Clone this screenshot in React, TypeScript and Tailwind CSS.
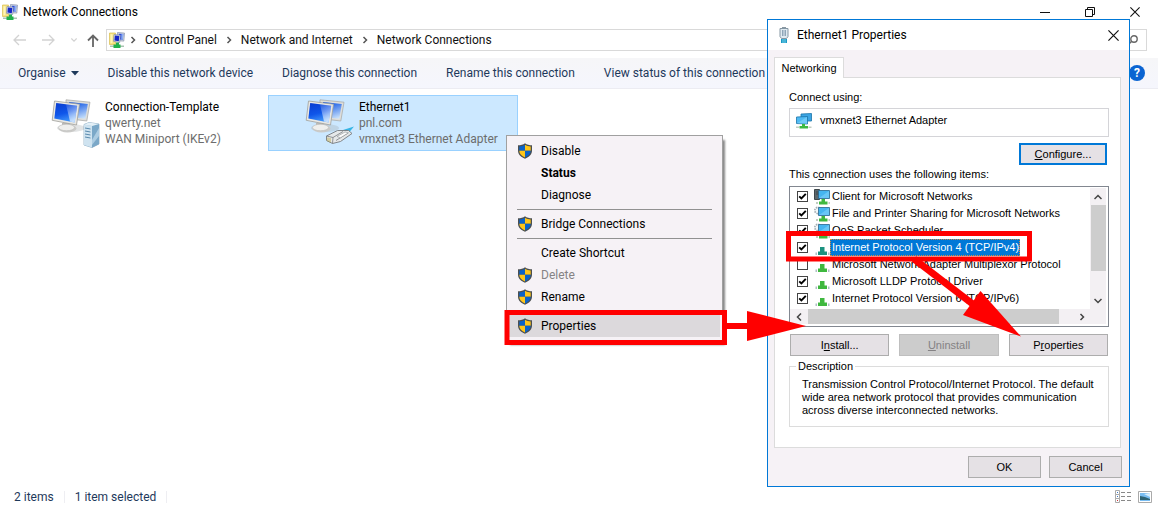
import React from "react";

const WINDOW_FONT = "font-[Roboto,'Noto_Sans',sans-serif]";
const DIALOG_FONT = "font-['Liberation_Sans',Arial,sans-serif]";

function NetworkFolderIcon() {
  return (
    <svg width="16" height="16" viewBox="0 0 16 16" aria-hidden="true">
      <path d="M.5 1h6v11.500h-6z" fill="#f6e27c" stroke="#d9bd52" strokeWidth="0.7" />
      <path d="M1.500 2.200h2v9h-2z" fill="#fdf4b8" />
      <path d="M8.500.500l7 .6-.7 8-6.300-.4z" fill="#cfd6e4" stroke="#8791aa" strokeWidth="0.7" />
      <path d="M9.800 1.700l4.500.4-.5 5.700-4-.3z" fill="#2a48dc" />
      <path d="M12.500 2l1.800.1-.5 5.700-1.600-.1z" fill="#8eb0f4" />
      <path d="M5 2.500l6.300.7-.6 7.300-6.300-1.200z" fill="#d8dfec" stroke="#7f89a3" strokeWidth="0.7" />
      <path d="M5.900 3.600l4.400.5-.5 5.100-4.400-.8z" fill="#1726c8" />
      <path d="M7 10.500h3V13H7z" fill="#26ad52" />
      <path d="M1 13.500h14V15H1z" fill="#a9c3b1" />
      <path d="M4.500 12.500h7V16h-7z" fill="#1fb14b" />
    </svg>
  );
}

function Monitors() {
  return (
    <>
      <ellipse cx="20" cy="29" rx="14" ry="4" fill="#9fa4a8" opacity="0.3" />
      <path d="M15 .8L39 3.200 35.800 22 15 19.500z" fill="#dededb" stroke="#a5a5a2" strokeWidth="0.7" />
      <path d="M18 2.900l18.800 2-2.500 14.900L18 18z" fill="url(#screenBack)" />
      <path d="M11 24h8v4h-8z" fill="#b9b9b7" />
      <ellipse cx="16.500" cy="29.500" rx="9" ry="4" fill="#cbcbc9" />
      <ellipse cx="15.500" cy="28.500" rx="8" ry="3.200" fill="#efefed" stroke="#b5b5b2" strokeWidth="0.500" />
      <path d="M3.500 2l25 3.200L25.500 26 1.200 21.300z" fill="#e9e8e4" stroke="#a09f9b" strokeWidth="0.800" />
      <path d="M5.200 4l21 2.700-2.600 16.800L3.300 19.600z" fill="url(#screenFront)" />
      <path d="M15 5.300l11.200 1.400-2.600 16.800-4.600-.9z" fill="url(#screenShine)" />
    </>
  );
}

function ConnectionIcon({ kind }: { kind: "server" | "cable" }) {
  return (
    <svg width="50" height="50" viewBox="0 0 50 50" className="shrink-0" aria-hidden="true">
      <defs>
        <linearGradient id="screenFront" x1="0" y1="0" x2="0.3" y2="1">
          <stop offset="0" stopColor="#0a3ccf" />
          <stop offset="0.6" stopColor="#0f56ea" />
          <stop offset="1" stopColor="#3f93f8" />
        </linearGradient>
        <linearGradient id="screenShine" x1="0" y1="0" x2="0.4" y2="1">
          <stop offset="0" stopColor="#fff" stopOpacity="0.1" />
          <stop offset="1" stopColor="#fff" stopOpacity="0.7" />
        </linearGradient>
        <linearGradient id="screenBack" x1="0.4" y1="0" x2="0.8" y2="1">
          <stop offset="0" stopColor="#0f55e4" />
          <stop offset="1" stopColor="#cfe6fc" />
        </linearGradient>
      </defs>
      <Monitors />
      {kind === "server" ? (
        <g>
          <path d="M33 25.500l5-2 10 1.500v20L41 48.500 33 46z" fill="#8fb9d6" stroke="#7095b0" strokeWidth="0.600" />
          <path d="M33 25.500l8 1.500v21.500L33 46z" fill="#cfe3f0" />
          <path d="M34 29l5.500 1M34 32l5.500 1M34 35l5.500 1M34 38l5.500 1" stroke="#5a8bae" strokeWidth="1" />
          <path d="M41 27l7-2v20l-7 3.500z" fill="#7ba8c8" />
          <path d="M41 41l7-12v8l-7 9z" fill="#c2dcec" opacity="0.700" />
          <path d="M33 25.500l5-2 10 1.500-7 2z" fill="#e4f0f7" />
        </g>
      ) : (
        <g strokeLinejoin="round">
          <path d="M38 31l11-3.500-5 6z" fill="#35b4e4" />
          <path d="M21.500 37l11-5.500h11l3.500 3-11.500 8-8 2-6-3z" fill="#e6e8e9" stroke="#777b7f" strokeWidth="0.900" />
          <path d="M21.500 37l6.500 1.500-.5 6M28 38.500l10-6M31 41.500l12-7.500" fill="none" stroke="#777b7f" strokeWidth="0.800" />
          <path d="M23 38.500v4M25 39v4.500" stroke="#b6a94e" strokeWidth="0.900" />
          <path d="M32 37.500l8-4.500 3.500.8-8 5z" fill="#fbfbfb" stroke="#8d9296" strokeWidth="0.600" />
        </g>
      )}
    </svg>
  );
}

function Shield() {
  return (
    <svg width="14" height="16" viewBox="0 0 14 16" aria-hidden="true">
      <path d="M7 .2C5.300 1.600 2.600 2.200 0 2.300v5.300c0 3.900 2.900 6.600 7 8.200 4.100-1.600 7-4.300 7-8.200V2.300C11.400 2.200 8.700 1.600 7 .2z" fill="#4b4f50" />
      <path d="M7 1.700C5.400 2.800 3.300 3.300 1.300 3.500v4.300H7z" fill="#0b63c9" />
      <path d="M7 1.700c1.600 1.100 3.700 1.600 5.700 1.800v4.300H7z" fill="#ffc61a" />
      <path d="M1.300 7.800H7v6.600c-3.300-1.400-5.700-3.500-5.700-6.600z" fill="#ffc61a" />
      <path d="M12.700 7.800H7v6.600c3.300-1.400 5.700-3.500 5.700-6.600z" fill="#0b63c9" />
    </svg>
  );
}

function Chevron({ dir, size = 8 }: { dir: "up" | "down" | "left" | "right"; size?: number }) {
  const paths = { up: "M.5 6L4 2.500 7.500 6", down: "M.5 2L4 5.500 7.500 2", left: "M6 .5L2.500 4 6 7.500", right: "M2.500 1l3 3-3 3" };
  return (
    <svg width={size} height={size} viewBox="0 0 8 8" aria-hidden="true">
      <path d={paths[dir]} fill="none" stroke="currentColor" strokeWidth="1.500" />
    </svg>
  );
}

function Cross({ size }: { size: number }) {
  return (
    <svg width={size} height={size} viewBox="0 0 10 10" aria-hidden="true">
      <path d="M.4.4l9.200 9.200M9.600.4L.4 9.600" stroke="#111" strokeWidth="1.100" />
    </svg>
  );
}

function TitleBar() {
  return (
    <header className="flex h-6 items-center pl-[2px] pr-[18px]">
      <NetworkFolderIcon />
      <h1 className="ml-[5px] flex-1 text-black">Network Connections</h1>
      <div className="flex items-center gap-[35px]">
        <button aria-label="Minimise">
          <svg width="10" height="10" viewBox="0 0 10 10"><path d="M0 5.500h10" stroke="#111" /></svg>
        </button>
        <button aria-label="Restore">
          <svg width="10" height="10" viewBox="0 0 10 10" fill="none" stroke="#111">
            <path d="M.5 2.500h7v7h-7zM2.500 2.500v-2h7v7h-2" />
          </svg>
        </button>
        <button aria-label="Close"><Cross size={10} /></button>
      </div>
    </header>
  );
}

function AddressRow() {
  return (
    <div className="flex h-[34px] items-center pl-[13px] pr-[11px] pb-[2px]">
      <nav className="flex w-[93px] items-center gap-4 text-[#d2d2d2]" aria-label="History">
        <button aria-label="Back">
          <svg width="13" height="12" viewBox="0 0 13 12" fill="none" stroke="currentColor" strokeWidth="1.300"><path d="M13 6H1M6 1L1 6l5 5" /></svg>
        </button>
        <button aria-label="Forward">
          <svg width="13" height="12" viewBox="0 0 13 12" fill="none" stroke="currentColor" strokeWidth="1.300"><path d="M0 6h12M7 1l5 5-5 5" /></svg>
        </button>
        <div className="flex items-center gap-[10px]">
          <button aria-label="Recent"><Chevron dir="down" size={6} /></button>
          <button aria-label="Up" className="text-[#666]">
            <svg width="12" height="13" viewBox="0 0 12 13" fill="none" stroke="currentColor" strokeWidth="1.800"><path d="M6 13V2M1 6.500l5-5 5 5" /></svg>
          </button>
        </div>
      </nav>
      <div className="flex h-[22px] flex-1 items-center gap-2 border border-[#d9d9d9] pl-[2px] text-[#111]">
        <span className="-mr-1"><NetworkFolderIcon /></span>
        <span className="text-[#555]"><Chevron dir="right" /></span>
        <a href="#control-panel">Control Panel</a>
        <span className="text-[#555]"><Chevron dir="right" /></span>
        <a href="#network">Network and Internet</a>
        <span className="text-[#555]"><Chevron dir="right" /></span>
        <a href="#connections">Network Connections</a>
      </div>
      <div className="ml-3 flex h-[22px] w-[200px] items-center border border-[#d9d9d9] pr-2">
        <input aria-label="Search" className="min-w-0 flex-1 outline-none" />
        <svg width="10" height="10" viewBox="0 0 10 10" fill="none" stroke="#666" strokeWidth="1.400" aria-hidden="true">
          <circle cx="6" cy="4" r="3.200" /><path d="M3.700 6.300L.5 9.500" />
        </svg>
      </div>
    </div>
  );
}

function CommandBar() {
  return (
    <div className="flex h-[31px] items-center gap-[29px] whitespace-nowrap border-b border-[#ececf2] bg-linear-to-b from-[#f6f6f8] to-[#f5f6fd] pl-[18px] pr-[13px] text-[#1e395b]">
      <button className="flex items-center gap-[5px]">
        Organise
        <svg width="8" height="5" viewBox="0 0 8 5" aria-hidden="true"><path d="M0 0h8L4 4.500z" fill="#1e395b" /></svg>
      </button>
      <button>Disable this network device</button>
      <button>Diagnose this connection</button>
      <button>Rename this connection</button>
      <button>View status of this connection</button>
      <button aria-label="Help" className="ml-auto flex size-4 items-center justify-center rounded-full bg-[#0a64d2] font-bold text-white">?</button>
    </div>
  );
}

function Connection({ name, domain, device, kind, selected }: { name: string; domain: string; device: string; kind: "server" | "cable"; selected?: boolean }) {
  return (
    <article className={selected ? "flex h-14 w-[250px] gap-1 border border-[#99d1ff] bg-[#cce8ff] pl-[36px] pt-[3px]" : "flex h-14 w-[250px] gap-1 border border-transparent pl-[36px] pt-[3px]"}>
      <ConnectionIcon kind={kind} />
      <div className="whitespace-nowrap leading-4 text-[#6d6d6d]">
        <h2 className="text-black">{name}</h2>
        <p>{domain}</p>
        <p>{device}</p>
      </div>
    </article>
  );
}

function MenuItem({ label, shield, look = "text-black" }: { label: string; shield?: boolean; look?: string }) {
  return (
    <li>
      <button className={"flex h-[22px] w-full items-center text-left " + look}>
        <span className="flex w-[32px] justify-start pl-[9px]">{shield && <Shield />}</span>
        {label}
      </button>
    </li>
  );
}

function Separator() {
  return <li className="mx-[8px] flex h-[7px] items-center" role="separator"><span className="h-px w-full bg-[#919191]" /></li>;
}

function ContextMenu() {
  return (
    <ul className="absolute left-[506px] top-[135px] w-[217px] border border-[#a0a0a0] bg-[#f6f2f6] px-[2px] py-1 shadow-[3px_4px_2px_-1px_#888]">
      <MenuItem label="Disable" shield />
      <MenuItem label="Status" look="font-bold text-black" />
      <MenuItem label="Diagnose" />
      <Separator />
      <MenuItem label="Bridge Connections" shield />
      <Separator />
      <MenuItem label="Create Shortcut" />
      <MenuItem label="Delete" shield look="text-[#858385]" />
      <MenuItem label="Rename" shield />
      <Separator />
      <MenuItem label="Properties" shield look="bg-[#dcd9dc] text-black" />
    </ul>
  );
}

function AdapterIcon() {
  return (
    <svg width="16" height="16" viewBox="0 0 16 16" aria-hidden="true">
      <path d="M5 1l10.500-.5v7.500H5z" fill="#3ba5e4" stroke="#1b73a8" strokeWidth="0.800" />
      <path d="M.5 4l11-.5v7.500l-11-.5z" fill="#4fbaf3" stroke="#1b73a8" strokeWidth="0.800" />
      <path d="M1 10.200L11 4v6.700z" fill="#86d6fa" opacity="0.600" />
      <path d="M6 11h3v2h3v2.500H3.500V13H6z" fill="#3cb843" />
      <path d="M0 13.500h3v1.500H0zM12.500 13.500h3v1.500h-3z" fill="#c2cdc2" />
    </svg>
  );
}

function ItemIcon({ kind }: { kind: "client" | "service" | "protocol" | "chosen" }) {
  if (kind === "protocol" || kind === "chosen") {
    const fill = kind === "chosen" ? "#1b9280" : "#3fb83f";
    return (
      <svg width="16" height="16" viewBox="0 0 16 16" className="shrink-0" aria-hidden="true">
        <path d="M6 7h4.500v4.500H13V15H4v-3.500h2z" fill={fill} />
        <path d="M1.500 12.500H3V15H1.500zM14 12.500h1.500V15H14z" fill="#aebfc4" />
      </svg>
    );
  }
  return (
    <svg width="16" height="16" viewBox="0 0 16 16" className="shrink-0" aria-hidden="true">
      {kind === "client" ? (
        <path d="M.5.500h5v10h-5zM2 3h3M2 5h3" fill="#5d686d" stroke="#3e474b" />
      ) : (
        <circle cx="4" cy="4.500" r="3.200" fill="#f4f7f8" stroke="#a3adb3" strokeWidth="1.600" strokeDasharray="1.500 1" />
      )}
      <path d="M4.500 1.500h11v8h-11z" fill="#45b5f0" stroke="#27658c" strokeWidth="0.800" />
      <path d="M5 9l10-7v7z" fill="#8bd7fb" opacity="0.500" />
      <path d="M7.500 10h3.500v2.500h2.500V15.500H5v-3h2.500z" fill="#3fb83f" />
      <path d="M2 13h2v2H2zM14.500 13H16v2h-1.500z" fill="#c2cdc2" />
    </svg>
  );
}

const ITEMS: { label: string; kind: "client" | "service" | "protocol" | "chosen"; on: boolean }[] = [
  { label: "Client for Microsoft Networks", kind: "client", on: true },
  { label: "File and Printer Sharing for Microsoft Networks", kind: "service", on: true },
  { label: "QoS Packet Scheduler", kind: "service", on: true },
  { label: "Internet Protocol Version 4 (TCP/IPv4)", kind: "chosen", on: true },
  { label: "Microsoft Network Adapter Multiplexor Protocol", kind: "protocol", on: false },
  { label: "Microsoft LLDP Protocol Driver", kind: "protocol", on: true },
  { label: "Internet Protocol Version 6 (TCP/IPv6)", kind: "protocol", on: true },
];

function ItemRow({ label, kind, on }: { label: string; kind: "client" | "service" | "protocol" | "chosen"; on: boolean }) {
  return (
    <li>
      <label className="flex h-[17px] items-center whitespace-nowrap">
        <span className="mr-[6px] grid size-[11px] shrink-0 place-items-center">
          <input type="checkbox" defaultChecked={on} className="peer col-start-1 row-start-1 size-[11px] appearance-none border border-[#444] bg-white" />
          <svg width="9" height="9" viewBox="0 0 9 9" className="pointer-events-none col-start-1 row-start-1 hidden peer-checked:block" aria-hidden="true">
            <path d="M1.200 4.300l2.200 2.200L7.800 1.800" fill="none" stroke="#000" strokeWidth="1.900" />
          </svg>
        </span>
        <ItemIcon kind={kind} />
        <span className={kind === "chosen" ? "h-[17px] border border-dotted border-[#d98a3c] bg-[#0078d7] pl-px leading-[15px] text-white" : "pl-[2px]"}>{label}</span>
      </label>
    </li>
  );
}

function DialogButton({ children, look = "border-[#adadad] bg-[#e5e1e5] text-black", disabled }: { children: React.ReactNode; look?: string; disabled?: boolean }) {
  return <button disabled={disabled} className={"h-[22px] border text-center " + look}>{children}</button>;
}

function PropertiesDialog() {
  return (
    <section role="dialog" aria-label="Ethernet1 Properties" className={"absolute left-[767px] top-[19px] w-[363px] border border-solid border-[#0078d7] bg-[#f6f2f6] text-[11px] leading-[13px] text-black " + DIALOG_FONT}>
      <div className={"flex h-[30px] items-center bg-white pl-[11px] pr-[10px] text-[12px] " + WINDOW_FONT}>
        <svg width="10" height="16" viewBox="0 0 10 16" aria-hidden="true">
          <path d="M3 0h4v2H3z" fill="#8a99a3" />
          <path d="M1 1.500h8v8l-1.500 2h-5L1 9.500z" fill="#dfeaf1" stroke="#8496a3" />
          <path d="M3 3h1.500v6H3zM5.500 3H7v6H5.500z" fill="#8fa6b8" />
          <path d="M2 12h6v4H2z" fill="#1c98c4" /><path d="M4 12v4M6 12v4" stroke="#8fe2f6" strokeWidth="0.800" />
        </svg>
        <h2 className="ml-2 flex-1">Ethernet1 Properties</h2>
        <button aria-label="Close dialog"><Cross size={11} /></button>
      </div>
      <div className="px-[6px] pb-2 pt-[7px]">
        <button role="tab" aria-selected="true" className="relative z-10 -mb-px block h-[21px] w-[70px] border border-b-0 border-[#dcdcdc] bg-white">Networking</button>
        <div className="mr-[2px] h-[371px] border border-[#dcdcdc] bg-white pl-[14px] pr-[11px] pt-[13px]">
          <p>Connect using:</p>
          <div className="mt-[4px] flex h-[29px] items-start gap-2 border border-[#d4d4d8] pl-[6px] pt-1">
            <AdapterIcon />
            <span className="pt-px">vmxnet3 Ethernet Adapter</span>
          </div>
          <div className="mt-[6px] grid grid-cols-[88px] justify-end pr-[2px]">
            <DialogButton look="border-2 border-[#0078d7] bg-[#e5e1e5]"><u>C</u>onfigure...</DialogButton>
          </div>
          <p className="mt-[3px] whitespace-nowrap">This c<u>o</u>nnection uses the following items:</p>
          <div className="mt-[5px] grid h-[141px] grid-cols-[minmax(0,1fr)_16px] grid-rows-[121px_15px] border border-[#828790] pr-[2px] pt-px">
            <ul className="overflow-hidden pl-[7px]">
              {ITEMS.map((item) => <ItemRow key={item.label} {...item} />)}
            </ul>
            <div className="flex flex-col items-center bg-[#f3f0f3] text-[#444]">
              <span className="flex h-[17px] items-center"><Chevron dir="up" /></span>
              <span className="h-[66px] w-[15px] bg-[#cdcdcd]" />
              <span className="mt-auto flex h-[17px] items-center"><Chevron dir="down" /></span>
            </div>
            <div className="col-span-2 flex items-center bg-[#f3f0f3] text-[#444]">
              <span className="flex w-[18px] justify-center"><Chevron dir="left" /></span>
              <span className="h-[15px] w-[251px] bg-[#cdcdcd]" />
              <span className="ml-auto mr-5"><Chevron dir="right" /></span>
            </div>
          </div>
          <div className="mt-[7px] grid grid-cols-3 gap-[10px] pl-px pr-px">
            <DialogButton>I<u>n</u>stall...</DialogButton>
            <DialogButton disabled look="border-[#bfbfbf] bg-[#cccccc] text-[#848284]"><u>U</u>ninstall</DialogButton>
            <DialogButton>P<u>r</u>operties</DialogButton>
          </div>
          <fieldset className="mt-[4px] h-[67px] min-w-0 border border-[#dcdcdc] px-[12px] pt-[5px]">
            <legend className="-ml-[6px] px-[2px]">Description</legend>
            <p className="whitespace-nowrap">
              Transmission Control Protocol/Internet Protocol. The default<br />
              wide area network protocol that provides communication<br />
              across diverse interconnected networks.
            </p>
          </fieldset>
        </div>
        <div className="mr-px mt-2 grid grid-cols-[73px_73px] justify-end gap-2">
          <DialogButton>OK</DialogButton>
          <DialogButton>Cancel</DialogButton>
        </div>
      </div>
    </section>
  );
}

function Callouts() {
  return (
    <svg width="540" height="130" viewBox="500 225 540 130" className="pointer-events-none absolute left-[500px] top-[225px] z-20" fill="none" stroke="#f00" aria-hidden="true">
      <path d="M507 312.500h217.500v30H507z" strokeWidth="5" />
      <path d="M727 326h24" strokeWidth="6" />
      <path d="M747 311l59 15-59 15z" fill="#f00" stroke="none" />
      <path d="M788.500 233.500h241v25.500h-241z" strokeWidth="5" />
      <path d="M914 259l60 46" strokeWidth="7" />
      <path d="M980.500 291l40.500 45.500-58-21.500z" fill="#f00" stroke="none" />
    </svg>
  );
}

function StatusBar() {
  return (
    <footer className="flex h-[23px] items-center pl-[14px] pr-[6px] text-[#1e395b]">
      <span>2 items</span>
      <span className="mx-[10px] h-3 w-px bg-[#eeeef2]" />
      <span>1 item selected</span>
      <span className="mx-[10px] h-3 w-px bg-[#eeeef2]" />
      <div className="ml-auto flex items-center gap-[7px]">
        <button aria-label="Details view">
          <svg width="16" height="13" viewBox="0 0 16 13" fill="none">
            <path d="M.5.500h4v4h-4zM.5 4.500h4v4h-4zM.5 8.500h4v4h-4z" stroke="#aaa" />
            <path d="M2 2h1v1H2z" fill="#3a78c8" /><path d="M2 6h1v1H2z" fill="#3a78c8" /><path d="M2 10h1v1H2z" fill="#c33" />
            <path d="M6 2.500h4M12 2.500h4M6 6.500h4M12 6.500h4M6 10.500h4M12 10.500h4" stroke="#888" />
          </svg>
        </button>
        <button aria-label="Large icons view">
          <svg width="14" height="12" viewBox="0 0 14 12">
            <path d="M.5.500h13v11H.5z" fill="#fff" stroke="#aaa" />
            <path d="M2 2h10v8H2z" fill="#79bdf2" /><path d="M2 5l5 1 5 2v1H2z" fill="#2e6374" /><path d="M6 3l6-1v4z" fill="#d6edfc" />
          </svg>
        </button>
      </div>
    </footer>
  );
}

export default function App() {
  return (
    <div className={"relative flex min-h-screen flex-col overflow-hidden bg-white text-[12px] leading-4 " + WINDOW_FONT}>
      <TitleBar />
      <AddressRow />
      <CommandBar />
      <main className="flex flex-1 items-start gap-1 pl-[14px] pt-[6px]">
        <Connection name="Connection-Template" domain="qwerty.net" device="WAN Miniport (IKEv2)" kind="server" />
        <Connection name="Ethernet1" domain="pnl.com" device="vmxnet3 Ethernet Adapter" kind="cable" selected />
      </main>
      <StatusBar />
      <ContextMenu />
      <PropertiesDialog />
      <Callouts />
    </div>
  );
}
